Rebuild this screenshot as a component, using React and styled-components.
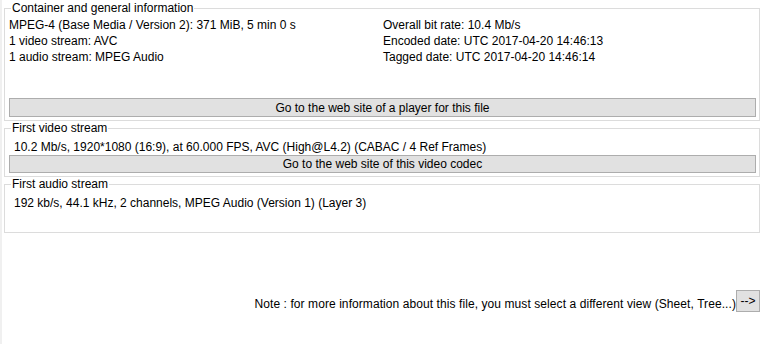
import React from 'react';
import styled, { createGlobalStyle } from 'styled-components';

const Global = createGlobalStyle`
  html, body { margin: 0; padding: 0; background: #fff; }
  body {
    font-family: "Liberation Sans", Arial, sans-serif;
    font-size: 12px;
    color: #000;
  }
`;

const Page = styled.div`
  display: flex;
  width: 763px;
  height: 344px;
  box-sizing: border-box;
  border-left: 2px solid #f0f0f0;
  overflow: hidden;
`;

const Main = styled.div`
  flex: 1;
  display: flex;
  flex-direction: column;
  padding: 1px 3px 0 2px;
`;

const Group = styled.fieldset`
  margin: 0;
  border: 1px solid #dcdcdc;
  padding: 2px 3px 3px 4px;
  min-width: 0;
`;

const Legend = styled.legend`
  padding: 0 1px;
  margin-left: 2px;
  line-height: 14px;
  font-size: 12px;
`;

const InfoGrid = styled.div`
  display: grid;
  grid-template-columns: 374px 1fr;
  height: 81px;
  align-content: start;
`;

const Line = styled.div`
  line-height: 16px;
  white-space: nowrap;
`;

const WideButton = styled.button`
  display: block;
  width: 100%;
  height: ${p => p.$h || 19}px;
  margin: 0;
  padding: 0;
  background: #e1e1e1;
  border: 1px solid #adadad;
  font-family: inherit;
  font-size: 12px;
  color: #000;
  line-height: 1;
`;

const StreamText = styled.div`
  line-height: 16px;
  padding: 2px 0 0 5px;
  height: ${p => p.$h}px;
  white-space: nowrap;
`;

const NoteRow = styled.div`
  display: flex;
  justify-content: flex-end;
  align-items: flex-start;
  margin-top: 57px;
`;

const NoteText = styled.span`
  line-height: 16px;
  margin-top: 6px;
  white-space: nowrap;
  letter-spacing: 0.08px;
`;

const ArrowButton = styled.button`
  width: 24px;
  height: 22px;
  margin: 0;
  padding: 0;
  background: #e1e1e1;
  border: 1px solid #adadad;
  font-family: inherit;
  font-size: 12px;
  color: #000;
`;

const general = [
  ['MPEG-4 (Base Media / Version 2): 371 MiB, 5 min 0 s', 'Overall bit rate: 10.4 Mb/s'],
  ['1 video stream: AVC', 'Encoded date: UTC 2017-04-20 14:46:13'],
  ['1 audio stream: MPEG Audio', 'Tagged date: UTC 2017-04-20 14:46:14'],
];

export default function App() {
  return (
    <>
      <Global />
      <Page>
        <Main>
          <Group>
            <Legend>Container and general information</Legend>
            <InfoGrid>
              {general.map(([l, r]) => (
                <React.Fragment key={l}>
                  <Line>{l}</Line>
                  <Line>{r}</Line>
                </React.Fragment>
              ))}
            </InfoGrid>
            <WideButton>Go to the web site of a player for this file</WideButton>
          </Group>
          <Group>
            <Legend>First video stream</Legend>
            <StreamText $h={16}>10.2 Mb/s, 1920*1080 (16:9), at 60.000 FPS, AVC (High@L4.2) (CABAC / 4 Ref Frames)</StreamText>
            <WideButton $h={18}>Go to the web site of this video codec</WideButton>
          </Group>
          <Group>
            <Legend>First audio stream</Legend>
            <StreamText $h={34}>192 kb/s, 44.1 kHz, 2 channels, MPEG Audio (Version 1) (Layer 3)</StreamText>
          </Group>
          <NoteRow>
            <NoteText>Note : for more information about this file, you must select a different view (Sheet, Tree...)</NoteText>
            <ArrowButton>--&gt;</ArrowButton>
          </NoteRow>
        </Main>
      </Page>
    </>
  );
}
